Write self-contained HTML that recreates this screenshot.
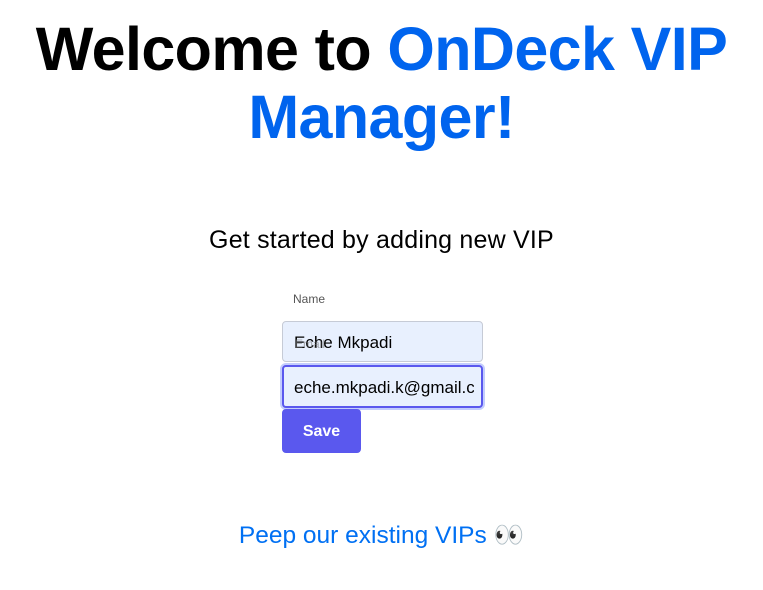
<!DOCTYPE html>
<html><head><style>
body{margin:0;width:763px;height:590px;background:#fff;font-family:"Liberation Sans",sans-serif;position:relative;overflow:hidden}
h1{position:absolute;top:15px;left:0;width:763px;margin:0;text-align:center;font-size:61px;line-height:68px;font-weight:bold;letter-spacing:-0.6px;color:#000}
h1 span{color:#0064ee}
.sub{position:absolute;top:226px;left:0;width:763px;text-align:center;font-size:25px;letter-spacing:0.2px}
.lbl{position:absolute;font-size:12px;color:#555}
.inp{position:absolute;left:282px;width:201px;height:41px;background:#e8f0fe;border:1px solid #c6cbd6;border-radius:4px;box-sizing:border-box;font-size:17px;padding-left:11px;line-height:42px;white-space:nowrap;overflow:hidden}
.btn{position:absolute;left:282px;top:409px;width:79px;height:44px;background:#5a58ee;border-radius:4px;color:#fff;font-weight:bold;font-size:16px;text-align:center;line-height:45px}
.peep{position:absolute;top:520px;left:0;width:763px;text-align:center;font-size:24.5px;color:#0070f3}
</style></head><body>
<h1>Welcome to <span>OnDeck VIP<br>Manager!</span></h1>
<div class="sub">Get started by adding new VIP</div>
<div class="lbl" style="left:293px;top:292px">Name</div>
<div class="inp" style="top:321px">Eche Mkpadi</div>
<div class="lbl" style="left:295px;top:337px;color:#777;opacity:.6">Email</div>
<div class="inp" style="top:365px;height:43px;border:2px solid #5a58ee;box-shadow:0 0 0 2px #c3cdfd;padding-left:10px;padding-right:10px"><div style="overflow:hidden;width:180px">eche.mkpadi.k@gmail.com</div></div>
<div class="btn">Save</div>
<div class="peep">Peep our existing VIPs 👀</div>
</body></html>
